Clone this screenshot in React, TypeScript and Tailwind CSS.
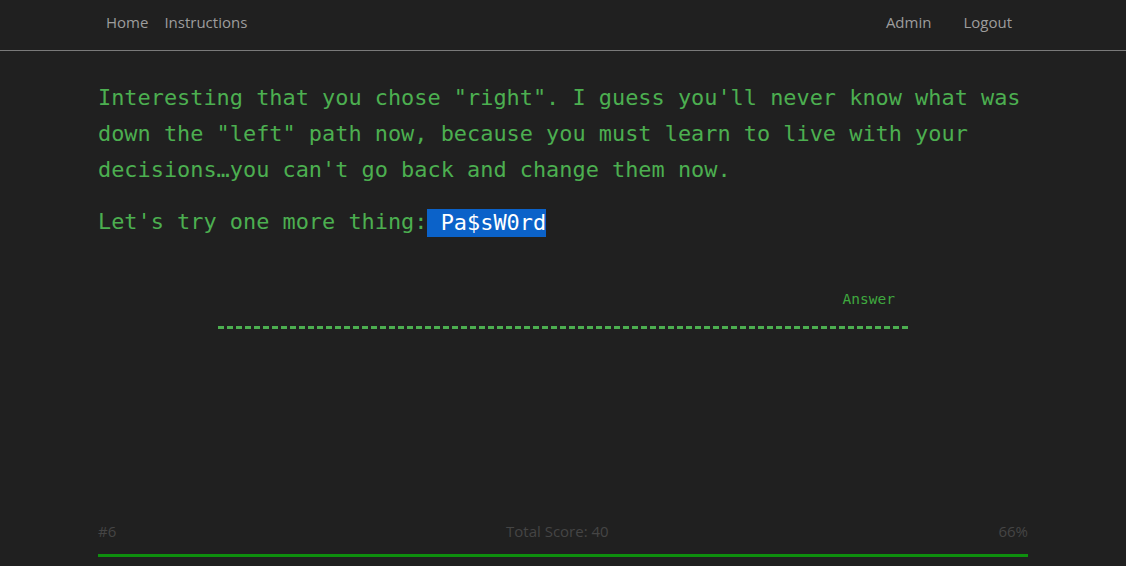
import * as React from 'react'

const mono = "font-['DejaVu_Sans_Mono','Liberation_Mono',monospace]"

function NavBar() {
  return (
    <nav className="h-[51px] border-b border-[#7a7a7a] font-['Open_Sans',sans-serif] text-[15px] text-[#9d9d9d]">
      <div className="mx-auto flex h-[50px] w-[930px] items-center justify-between pb-[6px]">
        <ul className="flex items-center">
          <li className="px-2">Home</li>
          <li className="px-2">Instructions</li>
        </ul>
        <ul className="flex items-center">
          <li className="px-4">Admin</li>
          <li className="px-4">Logout</li>
        </ul>
      </div>
    </nav>
  )
}

export default function App() {
  const [answer, setAnswer] = React.useState('')

  return (
    <div className="flex min-h-screen flex-col bg-[#202020]">
      <NavBar />

      <main className={`mx-auto w-[930px] pt-[29px] text-[21.9px] leading-[36px] text-[#4caf50] ${mono}`}>
        <p className="mb-4">
          Interesting that you chose "right". I guess you'll never know what was down the "left" path now,
          because you must learn to live with your decisions…you can't go back and change them now.
        </p>
        <p>
          Let's try one more thing:
          <span className="inline-block whitespace-pre bg-[#0b62c9] align-[-1px] leading-[28px] text-white"> Pa$sW0rd</span>
        </p>

        {/* answer box */}
        <div className="mx-auto mt-[49px] w-[690px]">
          <label className="block pr-[13px] text-right text-[14.5px] leading-[20px] text-[#3fa83f]">Answer</label>
          <input
            value={answer}
            onChange={(e) => setAnswer(e.target.value)}
            className="mt-[4px] block h-[16px] w-full border-0 border-b-[3px] border-dashed border-[#4caf50] bg-transparent text-[14px] text-[#4caf50] outline-none"
          />
        </div>
      </main>

      <footer className="mx-auto mt-auto w-[930px] pb-[9px] font-['Open_Sans',sans-serif] text-[15px] text-[#454545]">
        <div className="flex items-center justify-between pb-[13px] leading-[20px]">
          <span>#6</span>
          <span>Total Score: 40</span>
          <span>66%</span>
        </div>
        <div className="h-[3px] bg-[#0e8f0e]" />
      </footer>
    </div>
  )
}
